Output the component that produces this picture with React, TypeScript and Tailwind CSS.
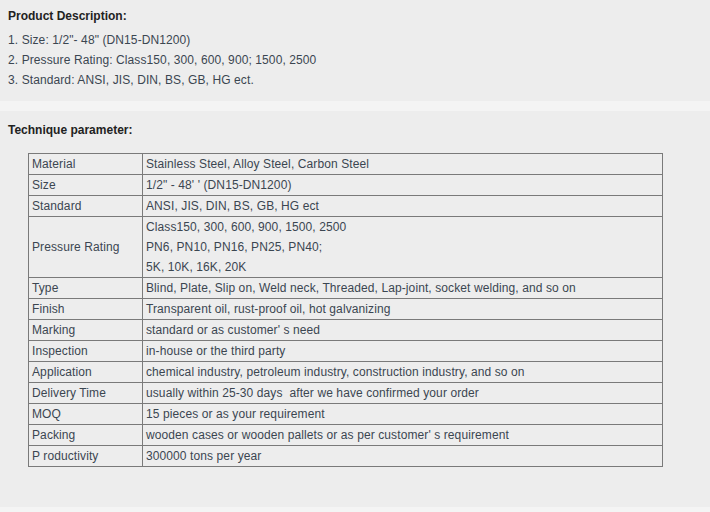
const rows: [string, string[]][] = [
    ["Material", ["Stainless Steel, Alloy Steel, Carbon Steel"]],
    ["Size", ["1/2\" - 48' ' (DN15-DN1200)"]],
    ["Standard", ["ANSI, JIS, DIN, BS, GB, HG ect"]],
    ["Pressure Rating", ["Class150, 300, 600, 900, 1500, 2500", "PN6, PN10, PN16, PN25, PN40;", "5K, 10K, 16K, 20K"]],
    ["Type", ["Blind, Plate, Slip on, Weld neck, Threaded, Lap-joint, socket welding, and so on"]],
    ["Finish", ["Transparent oil, rust-proof oil, hot galvanizing"]],
    ["Marking", ["standard or as customer' s need"]],
    ["Inspection", ["in-house or the third party"]],
    ["Application", ["chemical industry, petroleum industry, construction industry, and so on"]],
    ["Delivery Time", ["usually within 25-30 days\u00a0 after we have confirmed your order"]],
    ["MOQ", ["15 pieces or as your requirement"]],
    ["Packing", ["wooden cases or wooden pallets or as per customer' s requirement"]],
    ["P roductivity", ["300000 tons per year"]],
]

const App = () => {
    return (
        <div className="w-[710px] h-[512px] bg-[#f4f4f4] text-[12px] tracking-[0.1px] text-[#3b4651] font-['Liberation_Sans',Arial,sans-serif] overflow-hidden">
            {/* Descripción */}
            <div className="h-[101px] bg-[#ededed] pt-[6px] px-[8px]">
                <p className="font-bold text-[#222] leading-5 tracking-normal">Product Description:</p>
                <div className="mt-[4px] leading-5">
                    <p>1. Size: 1/2"- 48" (DN15-DN1200)</p>
                    <p>2. Pressure Rating: Class150, 300, 600, 900; 1500, 2500</p>
                    <p>3. Standard: ANSI, JIS, DIN, BS, GB, HG ect.</p>
                </div>
            </div>

            {/* Parámetros */}
            <div className="mt-[10px] h-[396px] bg-[#ededed] pt-[9px] px-[8px]">
                <p className="font-bold text-[#222] leading-5 tracking-normal">Technique parameter:</p>
                <table className="mt-[13px] ml-[20px] w-[635px] border-collapse border border-[#7a7a7a]">
                    <tbody>
                        {rows.map(([label, values]) => (
                            <tr key={label}>
                                <td className="w-[114px] border border-[#7a7a7a] px-[3px] leading-5 align-middle">{label}</td>
                                <td className="border border-[#7a7a7a] px-[3px] leading-5 align-middle">
                                    {values.map((v) => (
                                        <p key={v}>{v}</p>
                                    ))}
                                </td>
                            </tr>
                        ))}
                    </tbody>
                </table>
            </div>
        </div>
    )
}

export default App
